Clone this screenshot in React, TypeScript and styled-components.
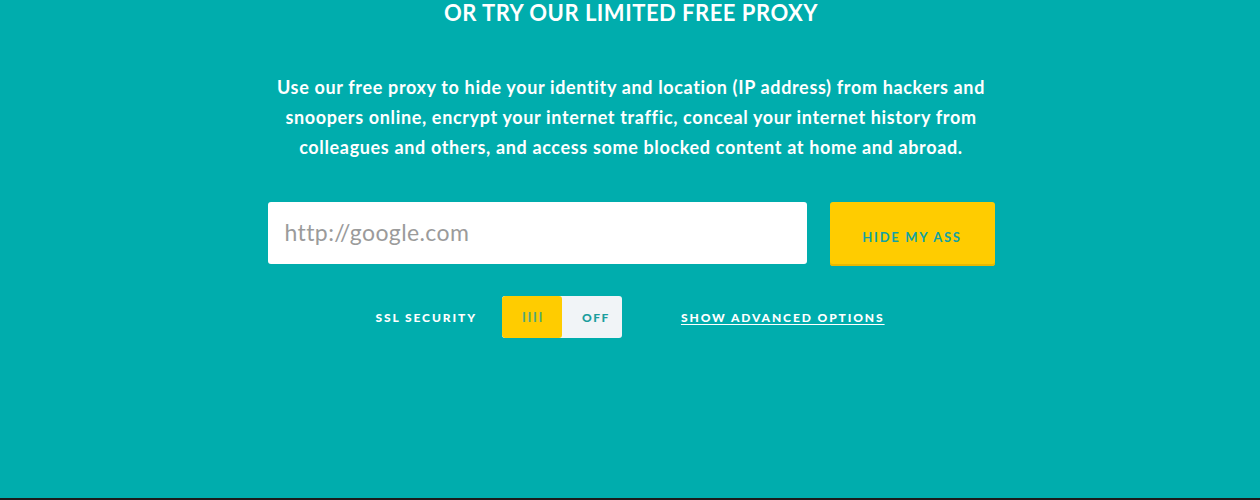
import styled, { createGlobalStyle } from "styled-components";

const GlobalStyle = createGlobalStyle`
  html, body {
    margin: 0;
    padding: 0;
    background: #00adad;
  }
  * {
    box-sizing: border-box;
  }
`;

// full-width teal band with the dark rule at its foot
const Section = styled.section`
  height: 500px;
  background: #00adad;
  border-bottom: 2px solid #1b1b1b;
  padding-left: 2px;
  display: flex;
  flex-direction: column;
  align-items: center;
  font-family: Lato, "Liberation Sans", sans-serif;
  color: #ffffff;
`;

const Title = styled.h2`
  margin: 0;
  font-size: 22px;
  line-height: 26px;
  font-weight: 700;
  text-transform: uppercase;
  letter-spacing: 0.5px;
`;

const Intro = styled.p`
  margin: 46px 0 0;
  width: 716px;
  text-align: center;
  font-size: 18px;
  line-height: 30px;
  font-weight: 700;
  letter-spacing: 0.65px;
`;

const Form = styled.form`
  margin-top: 40px;
  display: flex;
  align-items: flex-start;
  gap: 23px;
`;

const UrlInput = styled.input`
  width: 539px;
  height: 62px;
  border: none;
  border-radius: 3px;
  background: #ffffff;
  padding: 0 17px 2px;
  font-family: Lato, "Liberation Sans", sans-serif;
  font-size: 23px;
  letter-spacing: 0.4px;
  color: #333;
  outline: none;

  &::placeholder {
    color: #9b9b9b;
  }
`;

const SubmitButton = styled.button`
  width: 165px;
  height: 64px;
  border: none;
  border-radius: 3px;
  background: #ffcc00;
  box-shadow: inset 0 -2px 0 #e9b800;
  color: #13a2a2;
  font-family: Lato, "Liberation Sans", sans-serif;
  font-size: 13px;
  font-weight: 700;
  letter-spacing: 1.7px;
  text-transform: uppercase;
  padding-top: 6px;
`;

const OptionsRow = styled.div`
  margin-top: 30px;
  margin-left: -2px;
  display: flex;
  align-items: center;
`;

const OptionLabel = styled.span`
  font-size: 12px;
  font-weight: 900;
  letter-spacing: 1.9px;
  text-transform: uppercase;
  margin-right: 25px;
`;

// the switch: a light track with the yellow handle on its left half
const Toggle = styled.div`
  width: 120px;
  height: 42px;
  border-radius: 3px;
  background: #f1f4f7;
  display: flex;
  align-items: stretch;
  overflow: hidden;
`;

const Knob = styled.div`
  width: 60px;
  background: #ffcc00;
  border-radius: 3px;
  display: flex;
  align-items: center;
  justify-content: center;
  color: #55a87a;
  font-size: 13px;
  font-weight: 700;
  letter-spacing: 1.6px;
  padding-left: 2px;
`;

const ToggleText = styled.span`
  flex: 1;
  display: flex;
  align-items: center;
  justify-content: center;
  padding-left: 8px;
  color: #1c9e9e;
  font-size: 12px;
  font-weight: 900;
  letter-spacing: 1.5px;
`;

const AdvancedLink = styled.a`
  margin-left: 59px;
  color: #ffffff;
  font-size: 12px;
  font-weight: 900;
  letter-spacing: 1.9px;
  text-transform: uppercase;
  text-decoration: underline;
  text-underline-offset: 2px;
  cursor: pointer;
`;

export default function App() {
  return (
    <>
      <GlobalStyle />
      <Section>
        <Title>Or try our limited free proxy</Title>
        <Intro>
          Use our free proxy to hide your identity and location (IP address)
          from hackers and snoopers online, encrypt your internet traffic,
          conceal your internet history from colleagues and others, and access
          some blocked content at home and abroad.
        </Intro>
        <Form onSubmit={(e) => e.preventDefault()}>
          <UrlInput placeholder="http://google.com" />
          <SubmitButton type="submit">Hide my ass</SubmitButton>
        </Form>
        <OptionsRow>
          <OptionLabel>SSL Security</OptionLabel>
          <Toggle>
            <Knob>IIII</Knob>
            <ToggleText>OFF</ToggleText>
          </Toggle>
          <AdvancedLink>Show advanced options</AdvancedLink>
        </OptionsRow>
      </Section>
    </>
  );
}
